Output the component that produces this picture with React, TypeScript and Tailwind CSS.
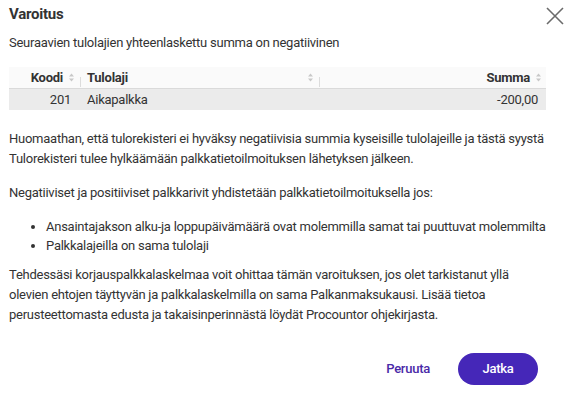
import React from "react";

function SortIcon() {
  return (
    <svg width="7" height="9" viewBox="0 0 7 9" className="shrink-0">
      <path d="M3.5 0.5 L6 3.5 L1 3.5 Z" fill="#c8c8c8" />
      <path d="M3.5 8.5 L6 5.5 L1 5.5 Z" fill="#c8c8c8" />
    </svg>
  );
}

export default function App() {
  return (
    <div
      className="w-[574px] h-[395px] bg-white text-[#333] relative overflow-hidden tracking-[-0.25px]"
      style={{ fontFamily: "Roboto, 'Noto Sans', sans-serif" }}
    >
      <button className="absolute right-[10px] top-[7px]" aria-label="Sulje">
        <svg width="18" height="18" viewBox="0 0 18 18">
          <path d="M1 1 L17 17 M17 1 L1 17" stroke="#6b6b6b" strokeWidth="1.6" />
        </svg>
      </button>
      <div className="px-[9px] pt-[4px]">
        <h2 className="text-[15px] font-bold leading-[20px] text-[#333]">Varoitus</h2>
        <p className="mt-[9px] text-[13px] leading-[20px]">
          Seuraavien tulolajien yhteenlaskettu summa on negatiivinen
        </p>
        <div className="mt-[14px] w-[537px] text-[13px]">
          <div className="flex h-[22px] items-stretch bg-[#fafafa] border-b border-[#dadada] font-bold">
            <div className="flex w-[71px] items-center justify-end gap-[5px] pr-[5px]">
              <span>Koodi</span>
              <SortIcon />
            </div>
            <div className="w-px h-[10px] self-end mb-[1px] bg-[#dcdcdc]" />
            <div className="flex w-[238px] items-center justify-between pl-[6px] pr-[5px]">
              <span>Tulolaji</span>
              <SortIcon />
            </div>
            <div className="w-px h-[10px] self-end mb-[1px] bg-[#dcdcdc]" />
            <div className="flex flex-1 items-center justify-end gap-[5px] pr-[4px]">
              <span>Summa</span>
              <SortIcon />
            </div>
          </div>
          <div className="flex h-[21px] items-center bg-[#ebebeb]">
            <div className="w-[72px] text-right pr-[10px]">201</div>
            <div className="w-[239px] pl-[6px]">Aikapalkka</div>
            <div className="flex-1 text-right pr-[8px]">-200,00</div>
          </div>
        </div>
        <div className="mt-[19px] text-[13px] leading-[20px]">
          <p>
            Huomaathan, että tulorekisteri ei hyväksy negatiivisia summia kyseisille tulolajeille ja tästä syystä
            Tulorekisteri tulee hylkäämään palkkatietoilmoituksen lähetyksen jälkeen.
          </p>
          <p className="mt-[14px]">
            Negatiiviset ja positiiviset palkkarivit yhdistetään palkkatietoilmoituksella jos:
          </p>
          <ul className="mt-[14px] pl-[37px] list-disc leading-[19px]">
            <li>Ansaintajakson alku-ja loppupäivämäärä ovat molemmilla samat tai puuttuvat molemmilta</li>
            <li>Palkkalajeilla on sama tulolaji</li>
          </ul>
          <p className="mt-[10px] max-w-[505px]">
            Tehdessäsi korjauspalkkalaskelmaa voit ohittaa tämän varoituksen, jos olet tarkistanut yllä olevien
            ehtojen täyttyvän ja palkkalaskelmilla on sama Palkanmaksukausi. Lisää tietoa perusteettomasta edusta ja
            takaisinperinnästä löydät Procountor ohjekirjasta.
          </p>
        </div>
        <div className="mt-[28px] flex items-center justify-end gap-[28px] pr-[27px]">
          <button className="text-[13px] font-medium text-[#4a2aa8]">Peruuta</button>
          <button className="h-[32px] w-[80px] rounded-full bg-[#4527b8] text-[13px] font-medium text-white">
            Jatka
          </button>
        </div>
      </div>
    </div>
  );
}
